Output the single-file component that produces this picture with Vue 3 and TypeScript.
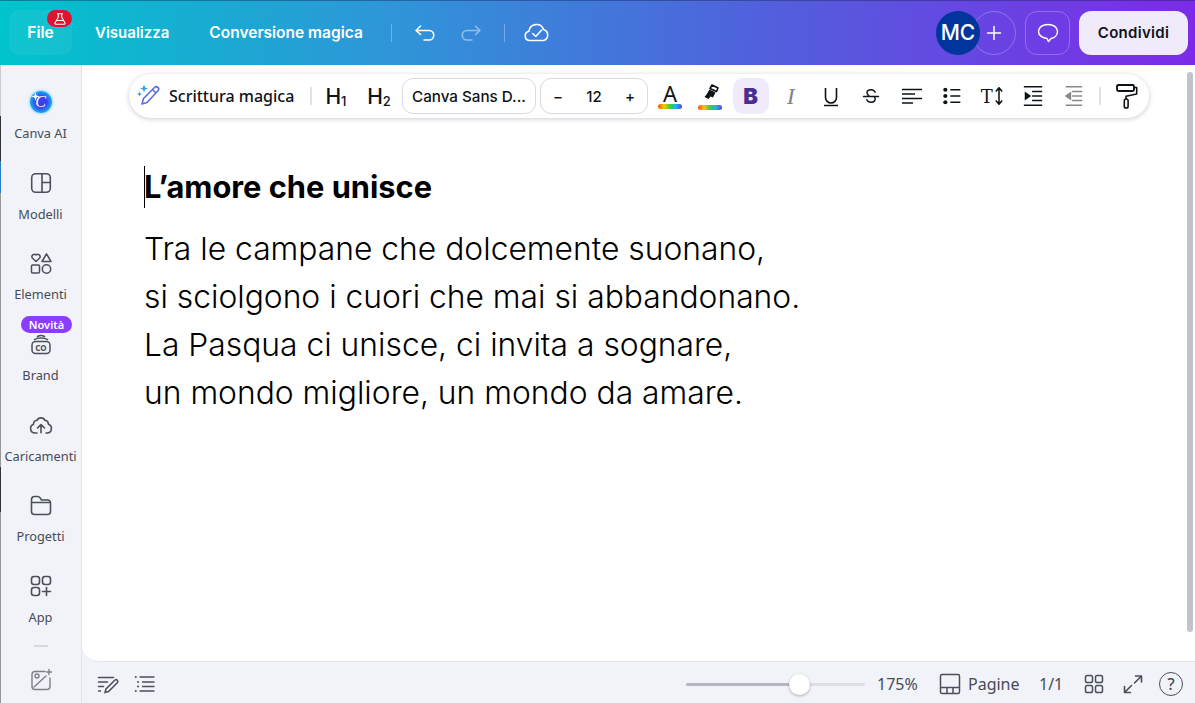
<script setup lang="ts">
const lines: string[] = [
  'Tra le campane che dolcemente suonano,',
  'si sciolgono i cuori che mai si abbandonano.',
  'La Pasqua ci unisce, ci invita a sognare,',
  'un mondo migliore, un mondo da amare.',
]
</script>

<template>
  <div class="root">
    <header class="top">
      <div class="nav">
        <div class="file">
          File
          <span class="lab">
            <svg width="14" height="12" viewBox="0 0 14 12" fill="none" stroke="#fff" stroke-width="1.1"><path d="M4 .8h6M5.300 1v3.200L2 10c-.3.6 0 1.200.7 1.200h8.600c.7 0 1-.6.7-1.200L8.700 4.200V1M3.500 7.500h7"/></svg>
          </span>
        </div>
        <span class="nav-item w1">Visualizza</span>
        <span class="nav-item w2">Conversione magica</span>
        <i class="tsep s1"></i>
        <svg class="undo" width="24" height="24" viewBox="0 0 24 24" fill="none" stroke="#fff" stroke-width="1.600" stroke-linecap="round" stroke-linejoin="round"><path d="M7.500 5 3 9.500 7.500 13.500M3.500 9.500H16a4.700 4.700 0 0 1 0 9.500h-5"/></svg>
        <svg class="redo" width="24" height="24" viewBox="0 0 24 24" fill="none" stroke="#fff" stroke-opacity=".45" stroke-width="1.600" stroke-linecap="round" stroke-linejoin="round"><path d="M16.500 5 21 9.500 16.500 13.500M20.500 9.500H8a4.700 4.700 0 0 0 0 9.500h5"/></svg>
        <i class="tsep s2"></i>
        <svg class="cloud" width="26" height="22" viewBox="0 0 26 22" fill="none" stroke="#fff" stroke-width="1.600" stroke-linecap="round" stroke-linejoin="round"><path d="M7 18.500H6A4.700 4.700 0 0 1 5 9.200 7.500 7.500 0 0 1 19.500 7.500 5.700 5.700 0 0 1 19.500 18.500H7Z"/><path d="m8.700 11.500 3 3 6-6.500"/></svg>
      </div>
      <div class="actions">
        <span class="avatar">MC</span>
        <span class="plus"><svg width="16" height="16" viewBox="0 0 16 16" stroke="#fff" stroke-width="1.500" stroke-linecap="round"><path d="M8 1.500v13M1.500 8h13"/></svg></span>
        <span class="comment"><svg width="24" height="24" viewBox="0 0 24 24" fill="none" stroke="#fff" stroke-width="1.500" stroke-linejoin="round"><path d="M12 3.500c5.300 0 9.500 2.800 9.500 7s-3.600 6.500-6.500 7l-2.500 3-1.500-3C7 17.200 2.500 14.700 2.500 10.500s4.200-7 9.500-7Z"/></svg></span>
        <span class="share">Condividi</span>
      </div>
    </header>

    <div class="body">
      <i class="edge"></i>
      <aside class="side">
        <div class="item">
          <span class="ai"><svg width="9" height="9" viewBox="0 0 9 9" class="spark"><path d="M4.500 0 5.500 3.500 9 4.500 5.500 5.500 4.500 9 3.500 5.500 0 4.500 3.500 3.500Z" fill="#fff"/></svg><b>C</b></span>
          <span>Canva AI</span>
        </div>
        <div class="item">
          <svg width="24" height="24" viewBox="0 0 24 24" fill="none" stroke="#4a4f5c" stroke-width="1.600"><rect x="2.700" y="2.700" width="18.600" height="18.600" rx="4"/><path d="M13 2.700v18.600M13 11.500h8.300"/></svg>
          <span>Modelli</span>
        </div>
        <div class="item">
          <svg width="24" height="24" viewBox="0 0 24 24" fill="none" stroke="#4a4f5c" stroke-width="1.500" stroke-linejoin="round"><path d="M7 10.500 3.300 7a2.400 2.400 0 0 1 3.700-3 2.400 2.400 0 0 1 3.700 3L7 10.500Z"/><path d="M17.500 2.800 22 10.500h-9Z"/><rect x="2.500" y="14" width="8" height="8" rx="1"/><circle cx="17.500" cy="18" r="4.200"/></svg>
          <span>Elementi</span>
        </div>
        <div class="item">
          <em class="new">Novità</em>
          <svg width="24" height="24" viewBox="0 0 24 24" fill="none" stroke="#4a4f5c" stroke-width="1.500" stroke-linecap="round"><rect x="3" y="9.500" width="18" height="12" rx="3.500"/><path d="M5.500 7.500C8.500 5.500 15.500 5.500 18.500 7.500M8.500 4.500c2-1.200 5-1.200 7 0"/><text x="12" y="18.500" font-size="8" font-weight="700" font-family="Noto Sans, sans-serif" text-anchor="middle" fill="#4a4f5c" stroke="none">CO</text></svg>
          <span>Brand</span>
        </div>
        <div class="item">
          <svg width="24" height="24" viewBox="0 0 24 24" fill="none" stroke="#4a4f5c" stroke-width="1.600" stroke-linecap="round" stroke-linejoin="round"><path d="M8 20H6a4.500 4.500 0 0 1-1.500-8.700 4 4 0 0 1 3.500-4 4.500 4.500 0 0 1 8 0 4.300 4.300 0 0 1 3.500 4A4.500 4.500 0 0 1 18 20h-1"/><path d="m8.500 15 3.500-3.500 3.500 3.500M12 11.700v8"/></svg>
          <span>Caricamenti</span>
        </div>
        <div class="item">
          <svg width="24" height="24" viewBox="0 0 24 24" fill="none" stroke="#4a4f5c" stroke-width="1.600" stroke-linejoin="round"><path d="M2.500 6.500a3 3 0 0 1 3-3h3.300c1 0 1.700.6 2.200 1.300L12.500 7H18.500a3 3 0 0 1 3 3v8.500a3 3 0 0 1-3 3h-13a3 3 0 0 1-3-3V6.500ZM2.500 9.500h19"/></svg>
          <span>Progetti</span>
        </div>
        <div class="item">
          <svg width="24" height="24" viewBox="0 0 24 24" fill="none" stroke="#4a4f5c" stroke-width="1.600" stroke-linecap="round"><rect x="2.500" y="2.500" width="8" height="8" rx="2.500"/><rect x="13.500" y="2.500" width="8" height="8" rx="2.500"/><rect x="2.500" y="13.500" width="8" height="8" rx="2.500"/><path d="M17.500 13.500v8M13.500 17.500h8"/></svg>
          <span>App</span>
        </div>
        <i class="dash"></i>
        <svg class="magic" width="24" height="24" viewBox="0 0 24 24" fill="none" stroke="#7b7f89" stroke-width="1.400" stroke-linecap="round"><path d="M16 3.500H6a3 3 0 0 0-3 3v12a3 3 0 0 0 3 3h12a3 3 0 0 0 3-3V10"/><circle cx="8" cy="8" r="2"/><path d="M5 19 17 8M20 1.500v5M17.500 4h5"/></svg>
      </aside>

      <main class="main">
        <section class="canvas">
          <div class="toolbar">
            <svg class="wand" width="26" height="26" viewBox="0 0 26 26" fill="none" stroke="#5a6fdc" stroke-width="1.600" stroke-linejoin="round"><path d="m5 21 1.500-5.500L17.500 4.500a2.300 2.300 0 0 1 3.500 3.300L10 19.500 5 21ZM15.500 6.500 19 10"/><path d="M7 1.500 8 4.500 11 5.500 8 6.500 7 9.500 6 6.500 3 5.500 6 4.500Z" fill="#2b9fd8" stroke="none"/><path d="M2.500 8.500 3.200 10.300 5 11 3.200 11.700 2.500 13.500 1.800 11.700 0 11 1.800 10.300Z" fill="#2b9fd8" stroke="none"/></svg>
            <span class="magic-label">Scrittura magica</span>
            <i class="bsep a"></i>
            <span class="h h1">H<sub>1</sub></span>
            <span class="h h2">H<sub>2</sub></span>
            <span class="font">Canva Sans D...</span>
            <span class="size"><span>−</span><span>12</span><span>+</span></span>
            <span class="btn">
              <span class="color-a">A<u class="rain"></u></span>
            </span>
            <span class="btn">
              <svg class="marker" width="20" height="20" viewBox="0 0 20 20"><path d="M12 1 18 4l-1.500 3.500L10 4.500Z" fill="none" stroke="#0e1318" stroke-width="1.600" stroke-linejoin="round"/><path d="M9.500 5.500l6 3-2.500 5-2.500-1-2 2.500-4-2 2-2.500Z" fill="#0e1318"/></svg>
              <u class="rain r2"></u>
            </span>
            <span class="btn bold"><b>B</b></span>
            <span class="btn italic">I</span>
            <span class="btn"><svg width="24" height="24" viewBox="0 0 24 24" fill="none" stroke="#0e1318" stroke-width="1.600"><path d="M6.500 4v9.500a5.500 5.500 0 0 0 11 0V4"/><path d="M5 21.500h14"/></svg></span>
            <span class="btn"><svg width="20" height="20" viewBox="0 0 24 24" fill="none" stroke="#0e1318" stroke-width="1.700" stroke-linecap="round"><path d="M17 7.500C16 5.300 14.500 4.500 12 4.500c-3 0-4.800 1.500-4.800 3.600 0 1.600 1 2.700 2.300 3.400M7 16.500c.8 2 2.500 3 5 3 3 0 5-1.500 5-3.800 0-1-.4-1.900-1-2.700M3 12.500h18"/></svg></span>
            <span class="btn"><svg width="24" height="24" viewBox="0 0 24 24" stroke="#0e1318" stroke-width="1.600"><path d="M2 5.500h20M2 10h13M2 14.500h20M2 19h11"/></svg></span>
            <span class="btn"><svg width="20" height="20" viewBox="0 0 24 24" stroke="#0e1318" stroke-width="1.800"><circle cx="4" cy="4.500" r="2.500" fill="#0e1318" stroke="none"/><circle cx="4" cy="12" r="2.500" fill="#0e1318" stroke="none"/><circle cx="4" cy="19.500" r="2.500" fill="#0e1318" stroke="none"/><path d="M10 4.500h12M10 12h12M10 19.500h12"/></svg></span>
            <span class="btn tt"><span>T</span><svg width="10" height="20" viewBox="0 0 10 22" fill="none" stroke="#0e1318" stroke-width="1.700" stroke-linejoin="round"><path d="M5 3v16M1.500 6 5 2l3.500 4M1.500 16 5 20l3.500-4"/></svg></span>
            <span class="btn"><svg width="22" height="22" viewBox="0 0 24 24" stroke="#0e1318" stroke-width="1.600"><path d="M2 2h20M11 7h11M11 12h11M11 17h11M2 22h20"/><path d="M3 7l7 5-7 5Z" fill="#0e1318" stroke="none"/></svg></span>
            <span class="btn dim"><svg width="22" height="22" viewBox="0 0 24 24" stroke="#0e1318" stroke-width="1.600"><path d="M4 2h18M11 7h11M11 12h11M11 17h11M4 22h18"/><path d="M10 7l-7 5 7 5Z" fill="#0e1318" stroke="none"/></svg></span>
            <i class="bsep b"></i>
            <svg class="roller" width="24" height="26" viewBox="0 0 24 26" fill="none" stroke="#0e1318" stroke-width="1.600" stroke-linejoin="round"><rect x="2" y="2" width="17" height="6" rx="1.500" stroke-width="1.900"/><path d="M19 4.500h2.700V11L11 13.200V16"/><rect x="9.300" y="16" width="3.800" height="9" rx="1.800"/></svg>
          </div>

          <div class="scroll"></div>

          <article class="doc">
            <h1><i class="caret"></i>L’amore che unisce</h1>
            <p v-for="l in lines" :key="l">{{ l }}</p>
          </article>
        </section>

        <footer class="foot">
          <div class="foot-l">
            <svg width="24" height="24" viewBox="0 0 24 24" fill="none" stroke="#4a4f5c" stroke-width="1.500" stroke-linecap="round"><path d="M2.500 5.500h15M2.500 10h9M2.500 14.500h5M2.500 19h2"/><path d="m9 20.500 1-3.500 9-9a1.800 1.800 0 0 1 2.500 2.500l-9 9-3.500 1Z"/></svg>
            <svg width="24" height="24" viewBox="0 0 24 24" stroke="#4a4f5c" stroke-width="1.500"><path d="M6.500 5h15M9 10h12.500M9 14.500h12.500M6.500 19h15"/><circle cx="2.800" cy="5" r="1" fill="#4a4f5c" stroke="none"/><circle cx="5" cy="10" r="1" fill="#4a4f5c" stroke="none"/><circle cx="5" cy="14.500" r="1" fill="#4a4f5c" stroke="none"/><circle cx="2.800" cy="19" r="1" fill="#4a4f5c" stroke="none"/></svg>
          </div>
          <div class="foot-r">
            <span class="slider"><i class="fill"></i><i class="knob"></i></span>
            <span class="pct">175%</span>
            <svg class="pages" width="22" height="22" viewBox="0 0 22 22" fill="none" stroke="#4a4f5c" stroke-width="1.500"><rect x="1.500" y="1.500" width="19" height="19" rx="1.500"/><path d="M1.500 14.500h19M8 14.500v6M14 14.500v6"/></svg>
            <span class="plabel">Pagine</span>
            <span class="count">1/1</span>
            <svg class="grid" width="20" height="20" viewBox="0 0 20 20" fill="none" stroke="#4a4f5c" stroke-width="1.500"><rect x="1.500" y="1.500" width="7" height="7" rx="1.800"/><rect x="11.500" y="1.500" width="7" height="7" rx="1.800"/><rect x="1.500" y="11.500" width="7" height="7" rx="1.800"/><rect x="11.500" y="11.500" width="7" height="7" rx="1.800"/></svg>
            <svg class="expand" width="20" height="20" viewBox="0 0 20 20" fill="none" stroke="#4a4f5c" stroke-width="1.600" stroke-linecap="round" stroke-linejoin="round"><path d="M12.500 2h6v6M18.500 2l-7 7M7.500 18.500h-6v-6M1.500 18.500l7-7"/></svg>
            <span class="help">?</span>
          </div>
        </footer>
      </main>
    </div>
  </div>
</template>

<style scoped>
.root { width: 1195px; height: 703px; display: flex; flex-direction: column; overflow: hidden; background: #f2f3f8; font-family: "Noto Sans", sans-serif; color: #0e1318; }
.top { height: 65px; flex: none; box-sizing: border-box; display: flex; justify-content: space-between; align-items: center; padding: 0 7px 0 9px; background: linear-gradient(92deg, #00c4cc 0%, #2f95d8 33%, #4f63dc 62%, #7d2ae8 100%); box-shadow: inset 0 1px rgba(20,30,80,.4); color: #fff; }
.nav { display: flex; align-items: center; }
.file { position: relative; width: 63px; height: 45px; border-radius: 10px; background: rgba(255,255,255,.06); display: flex; align-items: center; justify-content: center; margin-right: 23px; font: 600 15.500px Inter, sans-serif; }
.lab { position: absolute; left: 38px; top: 0; width: 25px; height: 17px; border-radius: 9px; background: #e0122f; display: flex; align-items: center; justify-content: center; }
.nav-item { font: 600 15px Inter, sans-serif; }
.w1 { margin-right: 40px; }
.w2 { font-size: 15.500px; }
.tsep { width: 1px; height: 18px; background: rgba(255,255,255,.3); }
.s1 { margin: 0 21px 0 28px; }
.undo { margin-right: 22px; }
.redo { margin-right: 21px; }
.s2 { margin-right: 19px; }
.actions { display: flex; align-items: center; }
.avatar { position: relative; z-index: 1; width: 44px; height: 44px; border-radius: 50%; background: #00359c; display: flex; align-items: center; justify-content: center; font: 500 21px Inter, sans-serif; }
.plus { width: 44px; height: 44px; box-sizing: border-box; margin-left: -8px; border: 1px solid rgba(255,255,255,.25); border-radius: 50%; display: flex; align-items: center; justify-content: center; }
.comment { width: 45px; height: 44px; box-sizing: border-box; margin: 0 9px; border: 1px solid rgba(255,255,255,.25); border-radius: 12px; display: flex; align-items: center; justify-content: center; }
.share { width: 109px; height: 44px; border-radius: 12px; background: #f0eafb; color: #0e1318; display: flex; align-items: center; justify-content: center; font: 600 15px Inter, sans-serif; letter-spacing: .3px; }
.body { flex: 1; min-height: 0; display: flex; }
.edge { width: 1px; flex: none; background: linear-gradient(180deg, #ccc 0 8%, #333 8% 15%, #2a7fc0 15% 20%, #999 20% 63%, #333 63% 70%, #999 70%); }
.side { width: 81px; flex: none; box-sizing: border-box; padding: 25px 1px 0 0; display: flex; flex-direction: column; align-items: center; border-right: 1px solid #e4e5ec; position: relative; }
.item { position: relative; width: 100%; height: 80.670px; flex: none; display: flex; flex-direction: column; align-items: center; gap: 11px; font-size: 12.800px; line-height: 16px; color: #454b58; white-space: nowrap; }
.item svg { flex: none; }
.ai { position: relative; width: 22px; height: 22px; margin: 1px 0; border-radius: 50%; background: radial-gradient(circle, #3a3ff0 35%, #1c9cf0 65%, #30d0f0 88%); box-shadow: 0 0 3px #34c4f5; color: #fff; display: flex; align-items: center; justify-content: center; font: italic 400 16px "Liberation Serif", serif; }
.ai b { font-weight: 400; }
.ai .spark { position: absolute; left: 1px; top: 1px; }
.new { position: absolute; top: -16px; left: 20px; width: 51px; height: 17px; border-radius: 9px; background: #8b3dff; color: #fff; font: normal 600 11px/17px "Noto Sans", sans-serif; text-align: center; z-index: 1; }
.dash { position: absolute; left: 33px; top: 580px; width: 14px; height: 2px; background: #d6d8e0; }
.magic { position: absolute; left: 28px; top: 603px; }
.main { flex: 1; min-width: 0; display: flex; flex-direction: column; }
.canvas { position: relative; flex: 1; background: #fff; border-bottom: 1px solid #e4e5ec; border-bottom-left-radius: 16px; overflow: hidden; }
.toolbar { position: absolute; left: 47px; top: 9px; width: 1020px; height: 44px; box-sizing: border-box; border-radius: 22px; background: #fff; box-shadow: 0 1px 5px rgba(20,25,50,.22); display: flex; align-items: center; padding-left: 8px; z-index: 2; }
.wand { flex: none; }
.magic-label { margin-left: 6px; font-size: 16px; font-weight: 500; white-space: nowrap; width: 127px; }
.bsep { width: 2px; height: 18px; background: #dfe1e6; flex: none; }
.a { margin: 0 8px 0 14px; }
.b { margin: 0 14px 0 6px; }
.h { font: 500 21px Inter, sans-serif; width: 42px; text-align: center; flex: none; }
.h sub { font-size: 13px; vertical-align: -2px; line-height: 0; }
.h1 { margin-left: -5px; }
.h2 { margin-left: 1px; }
.font { margin-left: 2px; width: 134px; height: 36px; box-sizing: border-box; border: 1px solid #d9dae0; border-radius: 11px; display: flex; align-items: center; justify-content: center; font: 500 15.200px Inter, sans-serif; flex: none; white-space: nowrap; }
.size { margin-left: 4px; margin-right: 2px; width: 108px; height: 36px; box-sizing: border-box; border: 1px solid #d9dae0; border-radius: 11px; display: flex; align-items: center; justify-content: space-between; padding: 0 12px; font: 500 15px Inter, sans-serif; flex: none; }
.btn { position: relative; width: 40.300px; height: 36px; flex: none; display: flex; align-items: center; justify-content: center; }
.color-a { position: relative; font: 400 22px/30px "Noto Sans", sans-serif; margin-top: -6px; }
.rain { position: absolute; left: 50%; bottom: -1px; margin-left: -12px; width: 24px; height: 5px; border-radius: 3px; background: linear-gradient(90deg, #ff4a2a, #ffc800, #2ed14d, #18b6e8, #6a38ef); }
.marker { margin-top: -5px; }
.r2 { bottom: 4px; }
.bold { width: 36px; margin: 0 2px; border-radius: 10px; background: #f0eafb; color: #4b2d91; font: 700 22px Inter, sans-serif; }
.italic { font: italic 400 24px "Liberation Serif", serif; color: #858585; }
.tt { gap: 1px; font: 400 18px "DejaVu Serif", serif; }
.dim { opacity: .5; }
.roller { flex: none; }
.scroll { position: absolute; right: 2px; top: 7px; width: 6px; height: 560px; border-radius: 3px; background: #c0c3cb; }
.doc { padding: 100px 0 0 62px; color: #000; font-family: Inter, sans-serif; }
h1 { position: relative; margin: 0 0 16px; font-size: 30.800px; line-height: 44px; font-weight: 700; white-space: nowrap; }
.caret { position: absolute; left: 0; top: 1px; width: 1px; height: 42px; background: #000; }
p { margin: 0; font-size: 31.800px; line-height: 48px; font-weight: 300; white-space: nowrap; }
.foot { flex: none; display: flex; align-items: center; justify-content: space-between; padding: 3px 12px 0 14px; box-sizing: content-box; height: 38px; font-size: 16px; color: #454b58; }
.foot-l { display: flex; gap: 13px; }
.foot-r { display: flex; align-items: center; }
.slider { position: relative; width: 179px; height: 3px; border-radius: 2px; background: #dcdee5; }
.fill { position: absolute; left: 0; top: 0; width: 112px; height: 3px; background: #b3b7c1; border-radius: 2px; }
.knob { position: absolute; left: 103px; top: -9px; width: 21px; height: 21px; border-radius: 50%; background: #fff; box-shadow: 0 1px 3px rgba(0,0,0,.3); }
.pct { margin-left: 12px; width: 62px; }
.pages { margin-right: 7px; }
.plabel { width: 71px; }
.count { width: 45px; }
.grid { margin-right: 19px; }
.expand { margin-right: 16px; }
.help { width: 24px; height: 24px; box-sizing: border-box; border: 1.500px solid #4a4f5c; border-radius: 50%; display: flex; align-items: center; justify-content: center; font-size: 16px; font-weight: 500; }
</style>
